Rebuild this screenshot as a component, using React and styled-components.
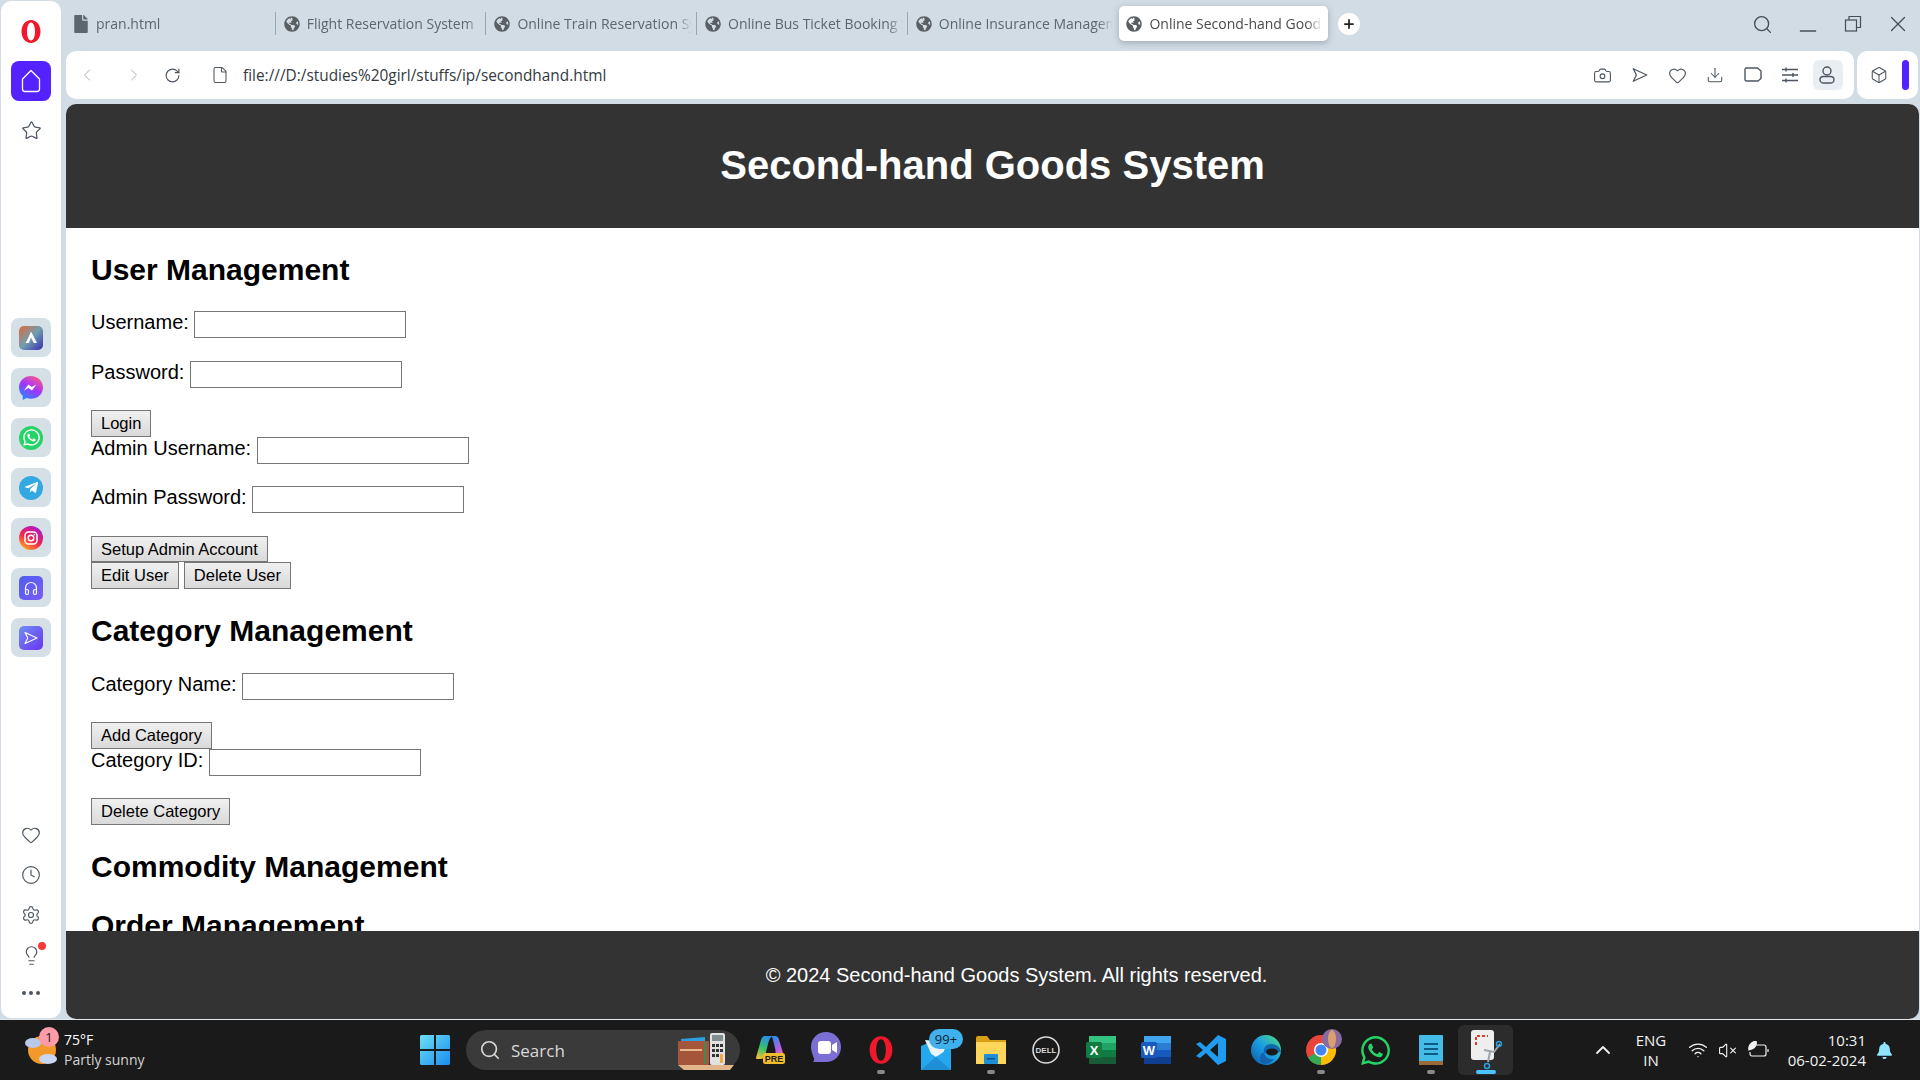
import styled, { createGlobalStyle } from 'styled-components';
import {
    Box as BoxIcon,
    Camera,
    ChevronLeft,
    ChevronRight,
    ChevronUp,
    Clock,
    Download,
    File,
    Heart,
    Lightbulb,
    Minus,
    Plus,
    RotateCw,
    Search,
    Settings,
    Star,
    VolumeX,
    Wifi,
    X,
} from 'lucide-react';
import { FaFile, FaGlobeAmericas, FaTelegramPlane, FaWhatsapp, FaBell } from 'react-icons/fa';

const GlobalStyle = createGlobalStyle`
    html, body {
        margin: 0;
        padding: 0;
        background: #1a1a1a;
    }
    * {
        box-sizing: border-box;
    }
`;

const TABS = [
    { title: 'pran.html', file: true },
    { title: 'Flight Reservation System' },
    { title: 'Online Train Reservation System' },
    { title: 'Online Bus Ticket Booking System' },
    { title: 'Online Insurance Management System' },
    { title: 'Online Second-hand Goods System', active: true },
];

const Screen = styled.div`
    width: 1920px;
    height: 1080px;
    display: flex;
    flex-direction: column;
    overflow: hidden;
`;

const Desktop = styled.div`
    height: 1020px;
    display: flex;
    background: #d1dce5;
    border-bottom: 1px solid #dfe6ec;
`;

const Sidebar = styled.aside`
    width: 60px;
    height: 1017px;
    margin: 1px 0 0 1px;
    background: #fff;
    border-radius: 10px;
    display: flex;
    flex-direction: column;
    align-items: center;
    flex-shrink: 0;
    color: #4d5661;
`;

const LogoSlot = styled.div`
    height: 60px;
    display: flex;
    align-items: center;
    justify-content: center;
`;

const HomeButton = styled.div`
    width: 40px;
    height: 40px;
    border-radius: 8px;
    background: #5421ff;
    color: #fff;
    display: flex;
    align-items: center;
    justify-content: center;
`;

const StarSlot = styled.div`
    height: 50px;
    margin-top: 4px;
    display: flex;
    align-items: center;
    justify-content: center;
`;

const AppStack = styled.div`
    margin-top: 163px;
    display: flex;
    flex-direction: column;
    gap: 11px;
`;

const AppTile = styled.div`
    width: 40px;
    height: 39px;
    border-radius: 8px;
    background: #d5dfe6;
    display: flex;
    align-items: center;
    justify-content: center;
`;

const AppGlyph = styled.div`
    width: 24px;
    height: 24px;
    border-radius: ${p => p.$radius || '50%'};
    background: ${p => p.$bg};
    color: #fff;
    display: flex;
    align-items: center;
    justify-content: center;
`;

const SideBottom = styled.div`
    margin-top: auto;
    display: flex;
    flex-direction: column;
    align-items: center;
    padding-bottom: 7px;
`;

const SideItem = styled.div`
    height: 40px;
    width: 40px;
    display: flex;
    align-items: center;
    justify-content: center;
    position: relative;
`;

const RedDot = styled.span`
    position: absolute;
    top: 7px;
    right: 5px;
    width: 8px;
    height: 8px;
    border-radius: 50%;
    background: #f43b3b;
`;

const Dots = styled.div`
    height: 36px;
    display: flex;
    gap: 3px;
    align-items: center;
    & > span {
        width: 4px;
        height: 4px;
        border-radius: 50%;
        background: #4d5661;
    }
`;

const Browser = styled.div`
    flex: 1;
    min-width: 0;
    margin-left: 5px;
    display: flex;
    flex-direction: column;
`;

const TabBar = styled.div`
    height: 51px;
    display: flex;
    align-items: flex-start;
    padding-top: 6px;
`;

const TabItem = styled.div`
    width: ${p => (p.$active ? '209px' : '210.7px')};
    height: 35px;
    display: flex;
    align-items: center;
    gap: 7px;
    padding: 0 3px 0 7px;
    flex-shrink: 0;
    position: relative;
    border-radius: 5px;
    background: ${p => (p.$active ? '#fff' : 'transparent')};
    box-shadow: ${p => (p.$active ? '0 2px 6px rgba(60, 80, 100, 0.35)' : 'none')};
    color: ${p => (p.$active ? '#4a4a4a' : '#5e666d')};
    font: 14px 'Open Sans', sans-serif;
    ${p =>
        p.$sep &&
        `&::after {
            content: '';
            position: absolute;
            right: 1px;
            top: 6px;
            height: 23px;
            width: 1px;
            background: #9aa5ae;
        }`}
`;

const TabIconSlot = styled.span`
    width: 16px;
    display: flex;
    justify-content: center;
    flex-shrink: 0;
`;

const TabTitle = styled.span`
    flex: 1;
    min-width: 0;
    white-space: nowrap;
    overflow: hidden;
    mask-image: linear-gradient(to right, #000 calc(100% - 18px), transparent calc(100% - 3px));
`;

const NewTab = styled.div`
    width: 22px;
    height: 22px;
    margin: 7px 0 0 10px;
    border-radius: 50%;
    background: #fff;
    color: #222;
    display: flex;
    align-items: center;
    justify-content: center;
`;

const WindowControls = styled.div`
    margin-left: auto;
    height: 36px;
    display: flex;
    align-items: center;
    color: #454d55;
`;

const ControlSlot = styled.div`
    width: 45px;
    display: flex;
    justify-content: center;
    padding-top: ${p => p.$drop || 0}px;
`;

const AddressRow = styled.div`
    height: 48px;
    display: flex;
    gap: 3px;
`;

const AddressBar = styled.div`
    flex: 1;
    background: #fff;
    border-radius: 10px;
    display: flex;
    align-items: center;
    color: #4d5661;
`;

const NavButton = styled.div`
    width: ${p => p.$w}px;
    margin-left: ${p => p.$ml || 0}px;
    display: flex;
    justify-content: center;
    color: ${p => (p.$dim ? '#a9b0b7' : '#4d5661')};
`;

const Url = styled.span`
    margin-left: 11px;
    font: 15.4px 'Open Sans', sans-serif;
    color: #333a40;
`;

const ToolIcons = styled.div`
    margin-left: auto;
    display: flex;
    align-items: center;
    margin-right: 8px;
`;

const ToolButton = styled.div`
    width: 37.4px;
    height: 30px;
    display: flex;
    align-items: center;
    justify-content: center;
    position: relative;
    z-index: 0;
    ${p =>
        p.$active &&
        `&::before {
            content: '';
            position: absolute;
            z-index: -1;
            left: 4px;
            width: 30px;
            height: 30px;
            border-radius: 6px;
            background: #e9eef2;
        }`}
`;

const ExtensionBar = styled.div`
    width: 61px;
    margin-right: 2px;
    background: #fff;
    border-radius: 10px;
    display: flex;
    align-items: center;
    gap: 14px;
    padding-left: 13px;
    color: #4d5661;
`;

const Accent = styled.div`
    width: 7px;
    height: 30px;
    border-radius: 4px;
    background: #5421ff;
`;

const Page = styled.main`
    height: 915px;
    margin: 5px 1px 0 0;
    border-radius: 10px;
    overflow: hidden;
    background: #fff;
    display: flex;
    flex-direction: column;
    font-family: 'Liberation Sans', Arial, sans-serif;
    color: #000;
`;

const Header = styled.header`
    height: 124px;
    flex-shrink: 0;
    background: #333;
    color: #fff;
    display: flex;
    align-items: center;
    justify-content: center;
`;

const Title = styled.h1`
    margin: -1px 0 0;
    font-size: 40px;
    font-weight: 700;
`;

const Content = styled.div`
    flex: 1;
    min-height: 0;
    overflow: hidden;
    padding: 25px 25px 0;
`;

const Heading = styled.h2`
    margin: 0 0 ${p => p.$mb ?? 25}px;
    font-size: 30px;
    line-height: 34px;
    font-weight: 700;
`;

const Section = styled.section`
    margin-bottom: 25px;
`;

const Field = styled.div`
    height: 27px;
    display: flex;
    align-items: center;
    gap: 5.5px;
    margin-bottom: ${p => p.$gap ?? 23}px;
`;

const Label = styled.label`
    font-size: 20px;
    line-height: 23px;
    margin-top: -4px;
`;

const Input = styled.input`
    width: 212px;
    height: 27px;
    padding: 0 2px;
    border: 1px solid #767676;
    background: #fff;
    border-radius: 0;
`;

const Buttons = styled.div`
    display: flex;
    gap: 5px;
    margin-bottom: ${p => p.$gap ?? 0}px;
`;

const Button = styled.button`
    height: ${p => p.$h || 27}px;
    padding: 0 9px;
    border: 1px solid #767676;
    border-radius: 0;
    background: linear-gradient(#f0f0f0, #d9d9d9);
    color: #000;
    font: 16.5px 'Liberation Sans', Arial, sans-serif;
`;

const Footer = styled.footer`
    height: 88px;
    flex-shrink: 0;
    background: #333;
    color: #fff;
    font-size: 20px;
    display: flex;
    align-items: center;
    justify-content: center;
    padding-left: 48px;
`;

const Taskbar = styled.footer`
    height: 60px;
    background: #1a1a1a;
    display: flex;
    align-items: center;
    color: #f2f2f2;
    font-family: 'Open Sans', sans-serif;
    position: relative;
`;

const Weather = styled.div`
    width: 407px;
    height: 60px;
    padding-left: 24px;
    display: flex;
    align-items: center;
    flex-shrink: 0;
    position: relative;
`;

const WeatherBadge = styled.span`
    position: absolute;
    left: 39px;
    top: 7px;
    width: 20px;
    height: 20px;
    border-radius: 50%;
    background: #ff9aa8;
    color: #222;
    font-size: 13px;
    display: flex;
    align-items: center;
    justify-content: center;
`;

const WeatherText = styled.div`
    font-size: 14px;
    line-height: 20px;
    color: #d4d4d4;
    & > b {
        display: block;
        font-weight: 400;
        color: #fff;
    }
`;

const TaskSlot = styled.div`
    width: 55px;
    height: 50px;
    flex-shrink: 0;
    display: flex;
    align-items: center;
    justify-content: center;
    position: relative;
    border-radius: 6px;
    background: ${p => (p.$active ? '#2c2c2c' : 'transparent')};
    &::after {
        content: '';
        display: ${p => (p.$running || p.$active ? 'block' : 'none')};
        position: absolute;
        bottom: 1px;
        left: 50%;
        margin-left: ${p => (p.$active ? -10 : -4)}px;
        width: ${p => (p.$active ? 20 : 8)}px;
        height: 4px;
        border-radius: 2px;
        background: ${p => (p.$active ? '#4cc2ff' : '#8a8a8a')};
    }
`;

const SearchBox = styled.div`
    width: 274px;
    height: 40px;
    margin: 0 3px 0 4px;
    flex-shrink: 0;
    border-radius: 20px;
    background: #3a3a3a;
    display: flex;
    align-items: center;
    padding: 0 6px 0 13px;
    gap: 10px;
    font-size: 17px;
    color: #d9d9d9;
`;

const SearchArt = styled.div`
    margin-left: auto;
    display: flex;
`;

const MailBadge = styled.span`
    position: absolute;
    left: 21px;
    top: 4px;
    width: 34px;
    height: 20px;
    border-radius: 10px;
    background: #3fb2ee;
    color: #10212c;
    font-size: 13px;
    text-align: center;
    line-height: 20px;
`;

const Tray = styled.div`
    position: absolute;
    left: 1591px;
    top: 0;
    height: 60px;
    display: flex;
    align-items: center;
`;

const TrayLang = styled.div`
    width: 40px;
    margin-left: 16px;
    text-align: center;
    font-size: 15px;
    line-height: 20px;
`;

const TrayIcons = styled.div`
    display: flex;
    align-items: center;
    gap: 10px;
    margin-left: 17px;
`;

const Clockface = styled.div`
    width: 90px;
    text-align: right;
    font-size: 15px;
    line-height: 20px;
    margin-left: 7px;
`;

const BellSlot = styled.div`
    margin-left: 10px;
    color: #8fe3ff;
    display: flex;
`;

const SendGlyph = ({ size = 20, stroke = 'currentColor', width = 1.4 }) => (
    <svg width={size} height={size} viewBox="0 0 20 20" fill="none" stroke={stroke} strokeWidth={width} strokeLinejoin="round">
        <path d="M2.500 3l15 7-15 7 3.500-7z" />
    </svg>
);

const TagGlyph = () => (
    <svg width="20" height="20" viewBox="0 0 20 20" fill="none" stroke="currentColor" strokeWidth="1.400" strokeLinejoin="round">
        <path d="M3.500 3h11l3.500 3v7.500l-3 2.500H3.500A1.500 1.500 0 0 1 2 14.500v-10A1.500 1.500 0 0 1 3.500 3z" />
    </svg>
);

const SliderGlyph = () => (
    <svg width="20" height="20" viewBox="0 0 20 20" fill="none" stroke="currentColor" strokeWidth="1.400">
        <path d="M2 4.500h16M2 10h16M2 15.500h16M6 2.500v4M13 8v4M6 13.500v4" />
    </svg>
);

const UserGlyph = () => (
    <svg width="20" height="20" viewBox="0 0 20 20" fill="none" stroke="currentColor" strokeWidth="1.400">
        <circle cx="10" cy="6" r="4" />
        <path d="M6.500 11.500h7c2 0 3.500 1.500 3.500 3.200s-1.500 3.300-3.500 3.300h-7C4.500 18 3 16.400 3 14.700s1.500-3.200 3.500-3.200z" />
    </svg>
);

const RestoreGlyph = () => (
    <svg width="18" height="18" viewBox="0 0 18 18" fill="none" stroke="currentColor" strokeWidth="1.200">
        <rect x="1.500" y="5" width="11" height="11" />
        <path d="M5 5V1.500h11.500V12.500H12.500" />
    </svg>
);

const InstagramIcon = () => (
    <svg width="24" height="24" viewBox="0 0 24 24">
        <defs>
            <linearGradient id="ig" x1="0.2" y1="1" x2="0.8" y2="0">
                <stop offset="0" stopColor="#fdb021" />
                <stop offset="0.45" stopColor="#f2254e" />
                <stop offset="1" stopColor="#a617d6" />
            </linearGradient>
        </defs>
        <circle cx="12" cy="12" r="12" fill="url(#ig)" />
        <rect x="6" y="6" width="12" height="12" rx="3.500" fill="none" stroke="#fff" strokeWidth="1.500" />
        <circle cx="12" cy="12" r="2.800" fill="none" stroke="#fff" strokeWidth="1.500" />
        <circle cx="15.400" cy="8.600" r="0.800" fill="#fff" />
    </svg>
);

const MessengerIcon = () => (
    <svg width="24" height="24" viewBox="0 0 24 24">
        <defs>
            <linearGradient id="msg" x1="0.2" y1="1" x2="0.8" y2="0">
                <stop offset="0" stopColor="#1e8dff" />
                <stop offset="0.5" stopColor="#a033ff" />
                <stop offset="1" stopColor="#ff5c87" />
            </linearGradient>
        </defs>
        <path d="M12 0C5.200 0 0 4.900 0 11.400c0 3.400 1.400 6.400 3.700 8.400V24l3.900-2.100c1.400.5 2.900.8 4.400.8 6.800 0 12-4.900 12-11.300S18.800 0 12 0z" fill="url(#msg)" />
        <path d="M5 14.500l4.300-6.100 3.400 2.600 4.600-2.600-4.300 6.200-3.400-2.600z" fill="#fff" />
    </svg>
);

const AriaIcon = () => (
    <svg width="24" height="24" viewBox="0 0 24 24">
        <defs>
            <linearGradient id="aria" x1="0" y1="0" x2="1" y2="1">
                <stop offset="0" stopColor="#e2673c" />
                <stop offset="0.5" stopColor="#6f9fb0" />
                <stop offset="1" stopColor="#3b2bb0" />
            </linearGradient>
        </defs>
        <rect width="24" height="24" rx="5" fill="url(#aria)" />
        <path d="M12 5.500l6 11.500h-3.200L12 11.500 9.800 17H6.500l2.500-4.500z" fill="#fff" />
    </svg>
);

const OperaLogo = ({ size = 20 }) => (
    <svg width={size} height={size * 1.25} viewBox="0 0 20 25">
        <path
            fillRule="evenodd"
            d="M10 1c5.500 0 9.500 5 9.500 11.500S15.500 24 10 24 .5 19 .5 12.500 4.500 1 10 1zm0 2.500c-2.500 0-4 4-4 9s1.500 9 4 9 4-4 4-9-1.500-9-4-9z"
            fill="#f2182b"
        />
    </svg>
);

const WeatherIcon = () => (
    <svg width="40" height="40" viewBox="0 0 40 40">
        <circle cx="18" cy="20" r="14" fill="#f2992a" />
        <ellipse cx="9" cy="13" rx="8" ry="5" fill="#b9c9ec" />
        <ellipse cx="24" cy="29" rx="9" ry="5" fill="#c9d6f2" />
    </svg>
);

const WindowsLogo = () => (
    <svg width="30" height="30" viewBox="0 0 30 30">
        <defs>
            <linearGradient id="win" x1="0" y1="0" x2="1" y2="1">
                <stop offset="0" stopColor="#6ce0f5" />
                <stop offset="1" stopColor="#1a8cf0" />
            </linearGradient>
        </defs>
        <path d="M0 1.500A1.500 1.500 0 0 1 1.500 0H14v14H0zM16 0h12.500A1.500 1.500 0 0 1 30 1.500V14H16zM0 16h14v14H1.500A1.500 1.500 0 0 1 0 28.500zM16 16h14v12.500a1.500 1.500 0 0 1-1.500 1.500H16z" fill="url(#win)" />
    </svg>
);

const WalletArt = () => (
    <svg width="56" height="40" viewBox="0 0 56 40">
        <rect x="32" y="3" width="15" height="32" rx="2" fill="#e2e2e2" />
        <rect x="34" y="5" width="11" height="6" fill="#7f8f8f" />
        <g fill="#333">
            <rect x="34" y="14" width="3" height="3" />
            <rect x="38" y="14" width="3" height="3" />
            <rect x="42" y="14" width="3" height="3" />
            <rect x="34" y="19" width="3" height="3" />
            <rect x="38" y="19" width="3" height="3" />
            <rect x="42" y="19" width="3" height="3" />
            <rect x="34" y="24" width="3" height="3" />
            <rect x="38" y="24" width="3" height="3" />
        </g>
        <rect x="42" y="24" width="3" height="9" fill="#f0a93a" />
        <path d="M3 9l24-2v5H3z" fill="#2b9fe0" />
        <rect x="0" y="11" width="31" height="24" rx="1" fill="#a5553a" />
        <rect x="2" y="19" width="22" height="2" fill="#e8b98c" />
        <rect x="26" y="12" width="2" height="22" fill="#3f8a4f" />
        <path d="M0 35h56l-4 5H6z" fill="#e3b58c" />
    </svg>
);

const CopilotIcon = () => (
    <svg width="30" height="30" viewBox="0 0 30 30">
        <defs>
            <linearGradient id="copa" x1="0.5" y1="0" x2="0.2" y2="1">
                <stop offset="0" stopColor="#2a8ee8" />
                <stop offset="0.5" stopColor="#35c26c" />
                <stop offset="1" stopColor="#f5c12e" />
            </linearGradient>
            <linearGradient id="copb" x1="0.3" y1="0" x2="0.8" y2="1">
                <stop offset="0" stopColor="#2a8ee8" />
                <stop offset="0.6" stopColor="#b35fe8" />
                <stop offset="1" stopColor="#ef6fb0" />
            </linearGradient>
        </defs>
        <path d="M9 1h8c-3 1-4 4-5 8l-3 12c-.5 2-2 3-4 3H1c-1 0-1-1-.8-2L5 5c.6-2.500 2-4 4-4z" fill="url(#copa)" />
        <path d="M15 1h4c2 0 3.500 1.500 4 3.500L27 18c.5 2 0 4-2 4h-8c3-2 3-5 2-9l-2-8c-.4-2-1-3.300-2-4z" fill="url(#copb)" />
        <rect x="7" y="18" width="22" height="11" rx="2.500" fill="#f2bd2c" />
        <text x="18" y="27" textAnchor="middle" fontFamily="Liberation Sans" fontWeight="700" fontSize="9" fill="#222">PRE</text>
    </svg>
);

const ChatIcon = () => (
    <svg width="30" height="36" viewBox="0 0 30 36">
        <path d="M15 0c8 0 15 6 15 15s-7 15-15 15H2c2-2 1-4 0-6-1-3-2-6-2-9C0 6 7 0 15 0z" fill="#7b6fd6" />
        <rect x="7" y="9" width="13" height="13" rx="3" fill="#fff" />
        <path d="M21 13l5-3v11l-5-3z" fill="#fff" />
    </svg>
);

const MailIcon = () => (
    <svg width="30" height="36" viewBox="0 0 30 36" style={{ marginTop: 4 }}>
        <path d="M0 12l18-8 12 8v24H0z" fill="#2aa6e8" />
        <path d="M4 6l22 2-4 12-10 4z" fill="#eaf4fb" />
        <path d="M0 13l15 10 15-10v23H0z" fill="#26a8ee" />
        <path d="M0 36l15-13 15 13z" fill="#1e8fd6" />
    </svg>
);

const FolderIcon = () => (
    <svg width="30" height="28" viewBox="0 0 30 28">
        <path d="M0 2a2 2 0 0 1 2-2h9l3 4h16v24H0z" fill="#d9a015" />
        <rect y="6" width="30" height="22" rx="1" fill="#ffd65c" />
        <rect x="8" y="18" width="14" height="10" rx="1" fill="#1d8ed8" />
        <rect x="11" y="22" width="8" height="1.500" fill="#0b4f85" />
    </svg>
);

const DellIcon = () => (
    <svg width="28" height="28" viewBox="0 0 28 28">
        <circle cx="14" cy="14" r="13" fill="none" stroke="#d9d9d9" strokeWidth="1.600" />
        <text x="14" y="17" textAnchor="middle" fontFamily="Liberation Sans" fontWeight="700" fontSize="8" fill="#d9d9d9">DELL</text>
    </svg>
);

const OfficeIcon = ({ letter, tile, shades }) => (
    <svg width="30" height="28" viewBox="0 0 30 28">
        <rect x="3" width="27" height="7" fill={shades[0]} />
        <rect x="3" y="7" width="27" height="7" fill={shades[1]} />
        <rect x="3" y="14" width="27" height="7" fill={shades[2]} />
        <rect x="3" y="21" width="27" height="7" fill={shades[3]} />
        <rect y="6" width="16" height="16" rx="1.500" fill={tile} />
        <text x="8" y="18.500" textAnchor="middle" fontFamily="Liberation Sans" fontWeight="700" fontSize="13" fill="#fff">{letter}</text>
    </svg>
);

const VsCodeIcon = () => (
    <svg width="30" height="30" viewBox="0 0 30 30">
        <path d="M22 0l8 4v22l-8 4-12-12-6 5-4-2 7-6-7-6 4-2 6 5zM22 8l-8 7 8 7z" fill="#1f9cf0" />
    </svg>
);

const EdgeIcon = () => (
    <svg width="30" height="30" viewBox="0 0 30 30">
        <defs>
            <linearGradient id="edge" x1="0" y1="1" x2="1" y2="0">
                <stop offset="0" stopColor="#0c59a4" />
                <stop offset="0.5" stopColor="#1b9de2" />
                <stop offset="1" stopColor="#50e07c" />
            </linearGradient>
        </defs>
        <circle cx="15" cy="15" r="15" fill="url(#edge)" />
        <path d="M30 17c-1-6-6-8-10-8-5 0-8 4-7 9 1 4 5 7 10 6-2 3-5 5-8 5-4 0-6-2-6-6 0-2 1-4 2-5" fill="#0f5fa8" opacity="0.9" />
        <ellipse cx="21" cy="17" rx="6" ry="3.500" fill="#1a1a1a" />
    </svg>
);

const ChromeIcon = () => (
    <svg width="50" height="50" viewBox="0 0 50 50">
        <circle cx="25" cy="25" r="15" fill="#e8453c" />
        <path d="M25 25l-13 7.500A15 15 0 0 0 25 40z" fill="#34a853" />
        <path d="M25 25l13-7.500A15 15 0 0 1 25 40z" fill="#fbbc05" />
        <circle cx="25" cy="25" r="7" fill="#fff" />
        <circle cx="25" cy="25" r="5.500" fill="#4285f4" />
        <circle cx="36" cy="14" r="10" fill="#8a6a9e" />
        <ellipse cx="36" cy="14" rx="4" ry="9" fill="#d8a070" />
    </svg>
);

const NotepadIcon = () => (
    <svg width="24" height="30" viewBox="0 0 24 30">
        <rect width="24" height="27" rx="1" fill="#43bde8" />
        <rect y="26" width="24" height="4" fill="#9a6a3a" />
        <rect x="5" y="8" width="14" height="2" fill="#0e5a82" />
        <rect x="5" y="13" width="14" height="2" fill="#0e5a82" />
        <rect x="5" y="18" width="14" height="2" fill="#0e5a82" />
    </svg>
);

const SnipIcon = () => (
    <svg width="32" height="40" viewBox="0 0 32 40">
        <rect x="1" y="0" width="23" height="30" rx="3" fill="#eee" />
        <path d="M6 15V6h12" fill="none" stroke="#d9402b" strokeWidth="2" strokeDasharray="3 2" />
        <path d="M14 20l10 2 6-8M20 22l-2 10" fill="none" stroke="#9aa5ae" strokeWidth="2" />
        <circle cx="29" cy="14" r="2.500" fill="none" stroke="#2b9fe0" strokeWidth="1.500" />
        <circle cx="17" cy="36" r="2.500" fill="none" stroke="#2b9fe0" strokeWidth="1.500" />
    </svg>
);

const BatteryLeaf = () => (
    <svg width="22" height="18" viewBox="0 0 22 18" fill="none" stroke="#f2f2f2" strokeWidth="1.200">
        <path d="M9 4h8a2 2 0 0 1 2 2v7a2 2 0 0 1-2 2H5a2 2 0 0 1-2-2v-2" />
        <path d="M21 8v3" />
        <path d="M2 9c-1-4 2-8 7-9 1 4-1 8-7 9z" fill="#f2f2f2" />
    </svg>
);

const TabIcon = ({ file }) => (
    <TabIconSlot>{file ? <FaFile size={18} color="#5e666d" /> : <FaGlobeAmericas size={16} color="#5a5f64" />}</TabIconSlot>
);

const App = () => (
    <>
        <GlobalStyle />
        <Screen>
            <Desktop>
                <Sidebar>
                    <LogoSlot>
                        <OperaLogo />
                    </LogoSlot>
                    <HomeButton>
                        <svg width="20" height="24" viewBox="0 0 20 24" fill="none" stroke="#fff" strokeWidth="1.300">
                            <path d="M10 1.500L1.500 10v10a2.500 2.500 0 0 0 2.500 2.500h12a2.500 2.500 0 0 0 2.500-2.500V10z" strokeLinejoin="round" />
                        </svg>
                    </HomeButton>
                    <StarSlot>
                        <Star size={21} strokeWidth={1.4} />
                    </StarSlot>
                    <AppStack>
                        <AppTile>
                            <AriaIcon />
                        </AppTile>
                        <AppTile>
                            <MessengerIcon />
                        </AppTile>
                        <AppTile>
                            <AppGlyph $bg="#25d366">
                                <FaWhatsapp size={19} />
                            </AppGlyph>
                        </AppTile>
                        <AppTile>
                            <AppGlyph $bg="#34a8e0">
                                <FaTelegramPlane size={15} />
                            </AppGlyph>
                        </AppTile>
                        <AppTile>
                            <InstagramIcon />
                        </AppTile>
                        <AppTile>
                            <AppGlyph $bg="linear-gradient(135deg, #4f5ff0, #7a5cf5)" $radius="5px">
                                <svg width="16" height="16" viewBox="0 0 16 16" fill="none" stroke="#fff" strokeWidth="1.200">
                                    <path d="M2.500 10V8a5.500 5.500 0 0 1 11 0v2" />
                                    <rect x="2.500" y="9.500" width="3" height="5" rx="1.500" />
                                    <rect x="10.500" y="9.500" width="3" height="5" rx="1.500" />
                                </svg>
                            </AppGlyph>
                        </AppTile>
                        <AppTile>
                            <AppGlyph $bg="linear-gradient(135deg, #6f8ff5, #6a35f0)" $radius="5px">
                                <SendGlyph size={16} />
                            </AppGlyph>
                        </AppTile>
                    </AppStack>
                    <SideBottom>
                        <SideItem>
                            <Heart size={20} strokeWidth={1.4} />
                        </SideItem>
                        <SideItem>
                            <Clock size={20} strokeWidth={1.4} />
                        </SideItem>
                        <SideItem>
                            <Settings size={20} strokeWidth={1.4} />
                        </SideItem>
                        <SideItem>
                            <Lightbulb size={21} strokeWidth={1.4} />
                            <RedDot />
                        </SideItem>
                        <Dots>
                            <span />
                            <span />
                            <span />
                        </Dots>
                    </SideBottom>
                </Sidebar>
                <Browser>
                    <TabBar>
                        {TABS.map((tab, i) => (
                            <TabItem key={tab.title} $active={tab.active} $sep={i < 4}>
                                <TabIcon file={tab.file} />
                                <TabTitle>{tab.title}</TabTitle>
                            </TabItem>
                        ))}
                        <NewTab>
                            <Plus size={14} strokeWidth={3} />
                        </NewTab>
                        <WindowControls>
                            <ControlSlot>
                                <Search size={21} strokeWidth={1.5} />
                            </ControlSlot>
                            <ControlSlot $drop={14}>
                                <Minus size={26} strokeWidth={1.2} />
                            </ControlSlot>
                            <ControlSlot>
                                <RestoreGlyph />
                            </ControlSlot>
                            <ControlSlot>
                                <X size={26} strokeWidth={1.2} />
                            </ControlSlot>
                        </WindowControls>
                    </TabBar>
                    <AddressRow>
                        <AddressBar>
                            <NavButton $dim $w={42}>
                                <ChevronLeft size={20} strokeWidth={1.2} />
                            </NavButton>
                            <NavButton $dim $w={52}>
                                <ChevronRight size={20} strokeWidth={1.2} />
                            </NavButton>
                            <NavButton $w={24}>
                                <RotateCw size={17} strokeWidth={1.6} />
                            </NavButton>
                            <NavButton $w={24} $ml={24}>
                                <File size={18} strokeWidth={1.4} />
                            </NavButton>
                            <Url>file:///D:/studies%20girl/stuffs/ip/secondhand.html</Url>
                            <ToolIcons>
                                <ToolButton>
                                    <Camera size={19} strokeWidth={1.4} />
                                </ToolButton>
                                <ToolButton>
                                    <SendGlyph size={18} />
                                </ToolButton>
                                <ToolButton>
                                    <Heart size={19} strokeWidth={1.4} />
                                </ToolButton>
                                <ToolButton>
                                    <Download size={18} strokeWidth={1.4} />
                                </ToolButton>
                                <ToolButton>
                                    <TagGlyph />
                                </ToolButton>
                                <ToolButton>
                                    <SliderGlyph />
                                </ToolButton>
                                <ToolButton $active>
                                    <UserGlyph />
                                </ToolButton>
                            </ToolIcons>
                        </AddressBar>
                        <ExtensionBar>
                            <BoxIcon size={18} strokeWidth={1.4} />
                            <Accent />
                        </ExtensionBar>
                    </AddressRow>
                    <Page>
                        <Header>
                            <Title>Second-hand Goods System</Title>
                        </Header>
                        <Content>
                            <Section>
                                <Heading $mb={24}>User Management</Heading>
                                <Field>
                                    <Label>Username:</Label>
                                    <Input />
                                </Field>
                                <Field $gap={22}>
                                    <Label>Password:</Label>
                                    <Input />
                                </Field>
                                <Buttons>
                                    <Button>Login</Button>
                                </Buttons>
                                <Field $gap={22}>
                                    <Label>Admin Username:</Label>
                                    <Input />
                                </Field>
                                <Field>
                                    <Label>Admin Password:</Label>
                                    <Input />
                                </Field>
                                <Buttons>
                                    <Button $h={26}>Setup Admin Account</Button>
                                </Buttons>
                                <Buttons>
                                    <Button>Edit User</Button>
                                    <Button>Delete User</Button>
                                </Buttons>
                            </Section>
                            <Section>
                                <Heading>Category Management</Heading>
                                <Field $gap={22}>
                                    <Label>Category Name:</Label>
                                    <Input />
                                </Field>
                                <Buttons>
                                    <Button>Add Category</Button>
                                </Buttons>
                                <Field $gap={22}>
                                    <Label>Category ID:</Label>
                                    <Input />
                                </Field>
                                <Buttons>
                                    <Button>Delete Category</Button>
                                </Buttons>
                            </Section>
                            <Section>
                                <Heading>Commodity Management</Heading>
                            </Section>
                            <Section>
                                <Heading>Order Management</Heading>
                            </Section>
                        </Content>
                        <Footer>© 2024 Second-hand Goods System. All rights reserved.</Footer>
                    </Page>
                </Browser>
            </Desktop>
            <Taskbar>
                <Weather>
                    <WeatherIcon />
                    <WeatherBadge>1</WeatherBadge>
                    <WeatherText>
                        <b>75°F</b>
                        Partly sunny
                    </WeatherText>
                </Weather>
                <TaskSlot>
                    <WindowsLogo />
                </TaskSlot>
                <SearchBox>
                    <Search size={22} strokeWidth={1.8} />
                    Search
                    <SearchArt>
                        <WalletArt />
                    </SearchArt>
                </SearchBox>
                <TaskSlot>
                    <CopilotIcon />
                </TaskSlot>
                <TaskSlot>
                    <ChatIcon />
                </TaskSlot>
                <TaskSlot $running>
                    <OperaLogo size={24} />
                </TaskSlot>
                <TaskSlot>
                    <MailIcon />
                    <MailBadge>99+</MailBadge>
                </TaskSlot>
                <TaskSlot $running>
                    <FolderIcon />
                </TaskSlot>
                <TaskSlot>
                    <DellIcon />
                </TaskSlot>
                <TaskSlot>
                    <OfficeIcon letter="X" tile="#107c41" shades={['#33c481', '#21a366', '#107c41', '#185c37']} />
                </TaskSlot>
                <TaskSlot>
                    <OfficeIcon letter="W" tile="#185abd" shades={['#41a5ee', '#2b7cd3', '#185abd', '#103f91']} />
                </TaskSlot>
                <TaskSlot>
                    <VsCodeIcon />
                </TaskSlot>
                <TaskSlot>
                    <EdgeIcon />
                </TaskSlot>
                <TaskSlot $running>
                    <ChromeIcon />
                </TaskSlot>
                <TaskSlot>
                    <FaWhatsapp size={33} color="#25d366" />
                </TaskSlot>
                <TaskSlot $running>
                    <NotepadIcon />
                </TaskSlot>
                <TaskSlot $active>
                    <SnipIcon />
                </TaskSlot>
                <Tray>
                    <ChevronUp size={24} strokeWidth={1.8} />
                    <TrayLang>
                        ENG
                        <br />
                        IN
                    </TrayLang>
                    <TrayIcons>
                        <Wifi size={20} strokeWidth={1.6} />
                        <VolumeX size={19} strokeWidth={1.4} />
                        <BatteryLeaf />
                    </TrayIcons>
                    <Clockface>
                        10:31
                        <br />
                        06-02-2024
                    </Clockface>
                    <BellSlot>
                        <FaBell size={17} />
                    </BellSlot>
                </Tray>
            </Taskbar>
        </Screen>
    </>
);

export default App;
